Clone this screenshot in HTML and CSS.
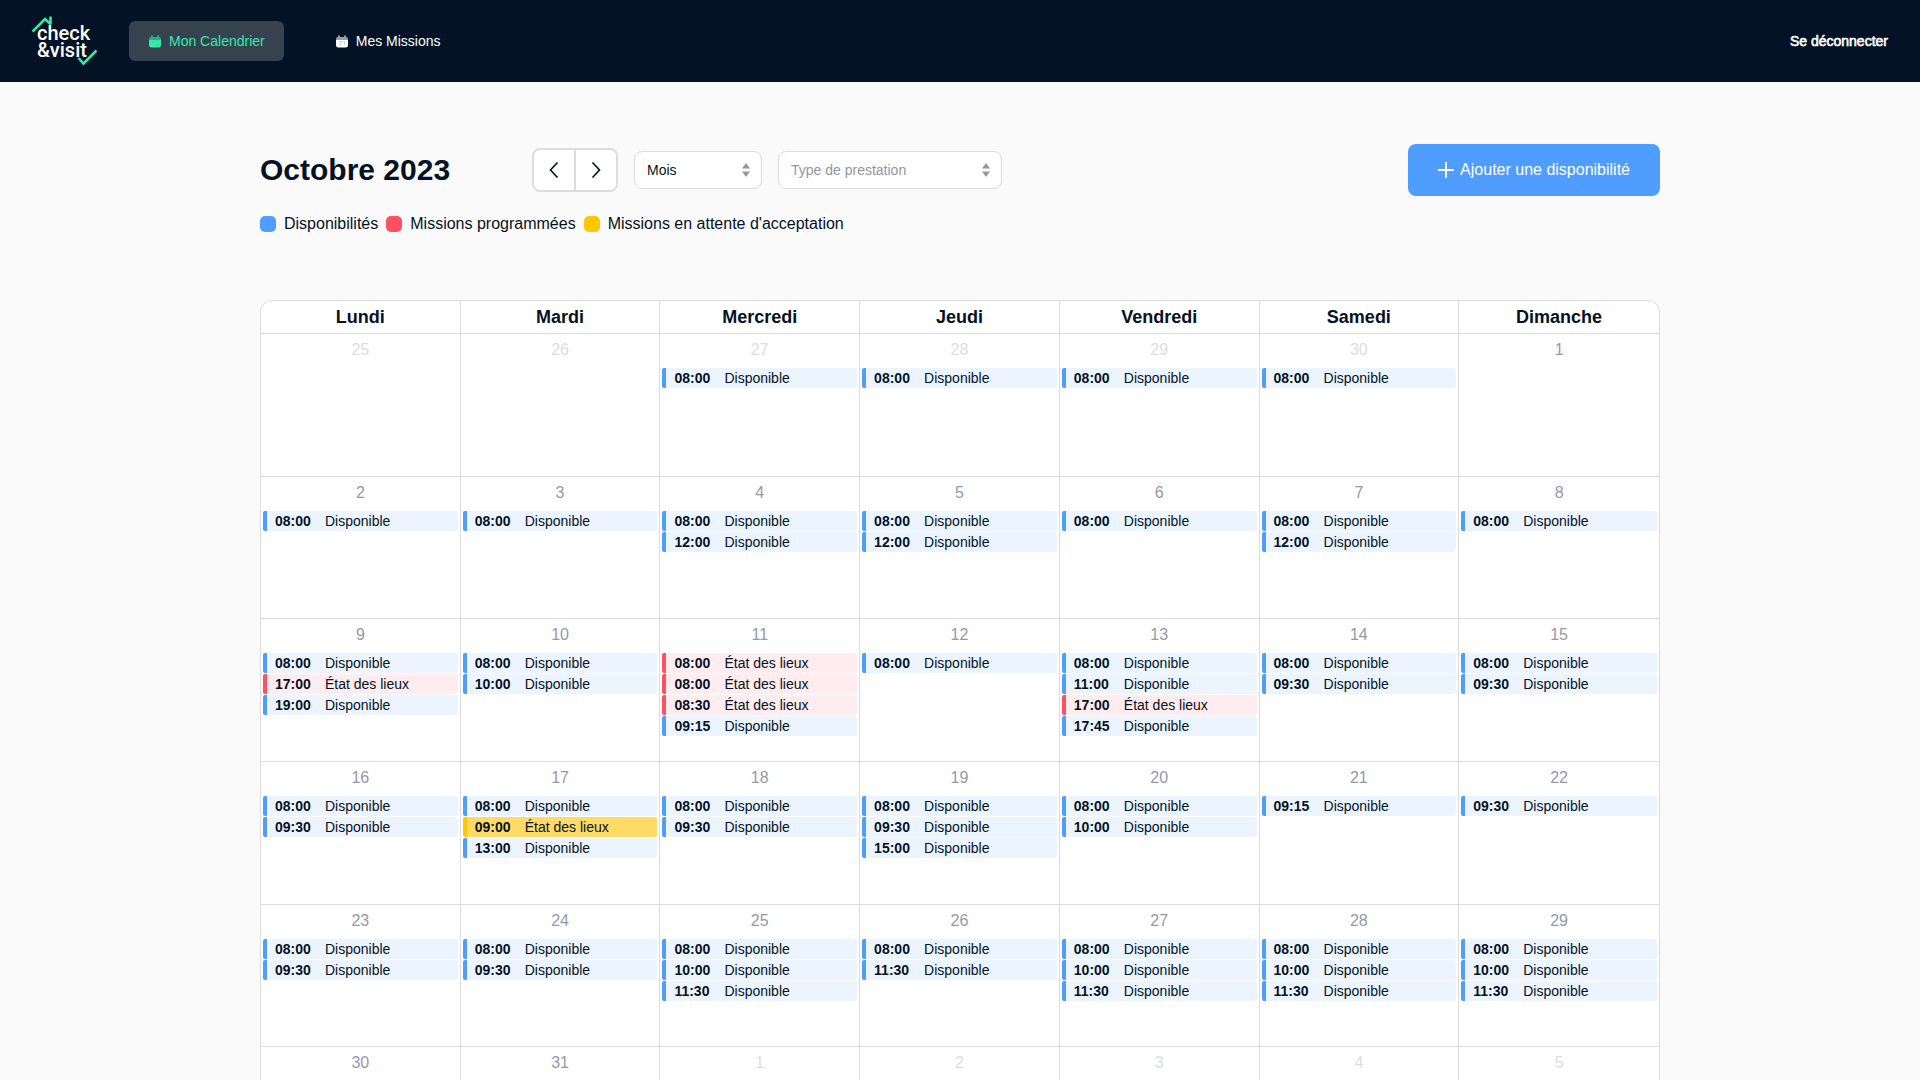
FILE: index.html
```html
<!DOCTYPE html>
<html lang="fr">
<head>
    <meta charset="UTF-8">
    <meta name="viewport" content="width=device-width, initial-scale=1.0">
    <title>Mon Calendrier</title>
    <link rel="stylesheet" href="styles.css">
</head>
<body>
    <header class="header">
        <a href="#" class="logo">
            <svg width="66" height="52" viewBox="0 0 66 52">
                <path d="M0.5 16.5 L13 4 L19 9.5 M18.5 9.5 V1.5" fill="none" stroke="#34eba6" stroke-width="2.6"/>
                <text x="5" y="25" class="logo-text">check</text>
                <text x="5" y="42" class="logo-text">&amp;visit</text>
                <path d="M46.5 43 L51.5 48.5 L64.5 35.5" fill="none" stroke="#34eba6" stroke-width="2.6"/>
            </svg>
        </a>
        <nav class="menu">
            <a href="#" class="menu-link active">
                <svg width="12" height="13" viewBox="0 0 12 13">
                    <path d="M2 2V1.2a1 1 0 0 1 2 0V2h4v-.8a1 1 0 0 1 2 0V2a2 2 0 0 1 2 2v1H0V4a2 2 0 0 1 2-2z" fill="#2ba98a"/>
                    <path d="M0 5h12v5a2.5 2.5 0 0 1-2.5 2.5h-7A2.5 2.5 0 0 1 0 10z" fill="#34eba6"/>
                    <path d="M3.5 6.5h1v1h-1z M8 9.5h1v1h-1z" fill="#2ba98a"/>
                </svg>
                Mon Calendrier
            </a>
            <a href="#" class="menu-link">
                <svg width="12" height="13" viewBox="0 0 12 13">
                    <path d="M2 2V1.2a1 1 0 0 1 2 0V2h4v-.8a1 1 0 0 1 2 0V2a2 2 0 0 1 2 2v1H0V4a2 2 0 0 1 2-2z" fill="#9a9ea6"/>
                    <path d="M0 5h12v5a2.5 2.5 0 0 1-2.5 2.5h-7A2.5 2.5 0 0 1 0 10z" fill="#fff"/>
                    <path d="M3 6.5h2.5v1.5H4v1.5h1.5M7 6.5h1.5v3.5" fill="none" stroke="#c9ccd1" stroke-width="0.8"/>
                </svg>
                Mes Missions
            </a>
        </nav>
        <a href="#" class="logout">Se déconnecter</a>
    </header>

    <main class="main">
        <div class="toolbar">
            <h1 class="title">Octobre 2023</h1>
            <div class="pager">
                <button type="button" aria-label="Mois précédent">
                    <svg width="10" height="16" viewBox="0 0 10 16"><path d="M8.5 0.5 L1.5 8 L8.5 15.5"/></svg>
                </button>
                <button type="button" aria-label="Mois suivant">
                    <svg width="10" height="16" viewBox="0 0 10 16"><path d="M1.5 0.5 L8.5 8 L1.5 15.5"/></svg>
                </button>
            </div>
            <div class="select select-view">
                <select aria-label="Affichage">
                    <option>Mois</option>
                </select>
                <svg width="8" height="14" viewBox="0 0 8 14"><path d="M4 0 L8 5.5 H0z M0 8.5 H8 L4 14z"/></svg>
            </div>
            <div class="select select-type">
                <select aria-label="Type de prestation">
                    <option>Type de prestation</option>
                </select>
                <svg width="8" height="14" viewBox="0 0 8 14"><path d="M4 0 L8 5.5 H0z M0 8.5 H8 L4 14z"/></svg>
            </div>
            <button type="button" class="add">
                <svg width="16" height="16" viewBox="0 0 16 16"><path d="M8 0 V16 M0 8 H16"/></svg>
                Ajouter une disponibilité
            </button>
        </div>

        <ul class="legend">
            <li class="blue">Disponibilités</li>
            <li class="red">Missions programmées</li>
            <li class="yellow">Missions en attente d'acceptation</li>
        </ul>

        <table class="calendar">
            <thead>
                <tr>
                    <th>Lundi</th>
                    <th>Mardi</th>
                    <th>Mercredi</th>
                    <th>Jeudi</th>
                    <th>Vendredi</th>
                    <th>Samedi</th>
                    <th>Dimanche</th>
                </tr>
            </thead>
            <tbody id="days"></tbody>
        </table>
    </main>

    <script src="calendar.js"></script>
</body>
</html>
```

FILE: styles.css
```css
*{
    box-sizing: border-box;
}
body{
    margin: 0;
    background-color: #fafafa;
    color: #031224;
    font-family: "Liberation Sans", Arial, sans-serif;
    font-size: 16px;
}
a{
    color: #fff;
    text-decoration: none;
}
button, select{
    font-family: inherit;
    color: inherit;
    cursor: pointer;
}

/* header */
.header{
    display: flex;
    align-items: center;
    height: 82px;
    padding: 0 32px;
    background-color: #031224;
    font-size: 14px;
}
.logo{
    display: flex;
    margin-right: 31px;
}
.logo-text{
    fill: #fff;
    font-family: Roboto, sans-serif;
    font-size: 20px;
    font-weight: 500;
}
.menu{
    display: flex;
    gap: 32px;
}
.menu-link{
    display: flex;
    align-items: center;
    gap: 8px;
    height: 40px;
    padding: 0 19px 0 20px;
    border-radius: 6px;
}
.menu-link.active{
    background-color: #36424f;
    color: #34eba6;
}
.logout{
    margin-left: auto;
    -webkit-text-stroke: 0.6px #fff;
}

/* toolbar */
.main{
    max-width: 1400px;
    margin: 0 auto;
    padding: 62px 0;
}
.toolbar{
    display: flex;
    align-items: center;
    gap: 16px;
    height: 52px;
}
.title{
    width: 256px;
    margin: 0;
    font-size: 30px;
}
.pager{
    display: flex;
    border: 2px solid #dedcde;
    border-radius: 8px;
    background-color: #fff;
}
.pager button{
    display: flex;
    align-items: center;
    justify-content: center;
    width: 40px;
    height: 40px;
    padding: 0;
    border: 0;
    background: none;
}
.pager button + button{
    width: 42px;
    border-left: 2px solid #dedcde;
}
.pager svg{
    fill: none;
    stroke: #031224;
    stroke-width: 1.6;
}
.select{
    position: relative;
}
.select select{
    width: 100%;
    height: 38px;
    padding: 0 12px;
    border: 1px solid #dcdcdf;
    border-radius: 8px;
    background-color: #fff;
    font-size: 14px;
    appearance: none;
}
.select svg{
    position: absolute;
    top: 12px;
    right: 12px;
    fill: #9994a0;
    pointer-events: none;
}
.select-view{
    width: 128px;
}
.select-type{
    width: 224px;
}
.select-type select{
    color: #9295a2;
}
.add{
    display: flex;
    align-items: center;
    gap: 6px;
    height: 52px;
    margin-left: auto;
    padding: 0 30px;
    border: 0;
    border-radius: 8px;
    background-color: #4f9dff;
    color: #fff;
    font-size: 16px;
}
.add svg{
    stroke: #fff;
    stroke-width: 2;
}

/* legend */
.legend{
    display: flex;
    gap: 8px;
    margin: 18px 0 66px;
    padding: 0;
    list-style: none;
    line-height: 20px;
}
.legend li{
    display: flex;
    align-items: center;
    gap: 8px;
}
.legend li::before{
    content: "";
    width: 16px;
    height: 16px;
    border-radius: 5px;
    background-color: #4f9dff;
}
.legend .red::before{
    background-color: #ff5064;
}
.legend .yellow::before{
    background-color: #ffc700;
}

/* calendar */
.calendar{
    width: 100%;
    height: 890px;
    table-layout: fixed;
    border: 1px solid #dcdcdc;
    border-radius: 12px;
    border-spacing: 0;
    background-color: #fff;
}
.calendar th{
    height: 32px;
    padding: 0;
    font-size: 18px;
    line-height: 20px;
}
.calendar td{
    height: 142px;
    padding: 6px 2px 0;
    border-top: 1px solid #dcdcdc;
    vertical-align: top;
}
.calendar th:not(:last-child), .calendar td:not(:last-child){
    border-right: 1px solid #dcdcdc;
}
.day{
    margin-bottom: 8px;
    color: #9599a8;
    line-height: 20px;
    text-align: center;
}
.day.other{
    color: #dcdde2;
}
.event{
    display: flex;
    height: 20px;
    margin-bottom: 1px;
    padding-left: 8px;
    border-left: 4px solid #4f9dff;
    border-radius: 2px;
    background-color: #ecf5ff;
    font-size: 14px;
    line-height: 20px;
}
.event b{
    width: 50px;
}
.event.mission{
    border-color: #ff5064;
    background-color: #ffecee;
}
.event.pending{
    border-color: #ffc700;
    background-color: #fddb66;
}
```

FILE: calendar.js
```js
// m = mission programmée, p = mission en attente
let events = {
    "27/9": ["08:00"],
    "28/9": ["08:00"],
    "29/9": ["08:00"],
    "30/9": ["08:00"],
    "2/10": ["08:00"],
    "3/10": ["08:00"],
    "4/10": ["08:00", "12:00"],
    "5/10": ["08:00", "12:00"],
    "6/10": ["08:00"],
    "7/10": ["08:00", "12:00"],
    "8/10": ["08:00"],
    "9/10": ["08:00", "17:00 m", "19:00"],
    "10/10": ["08:00", "10:00"],
    "11/10": ["08:00 m", "08:00 m", "08:30 m", "09:15"],
    "12/10": ["08:00"],
    "13/10": ["08:00", "11:00", "17:00 m", "17:45"],
    "14/10": ["08:00", "09:30"],
    "15/10": ["08:00", "09:30"],
    "16/10": ["08:00", "09:30"],
    "17/10": ["08:00", "09:00 p", "13:00"],
    "18/10": ["08:00", "09:30"],
    "19/10": ["08:00", "09:30", "15:00"],
    "20/10": ["08:00", "10:00"],
    "21/10": ["09:15"],
    "22/10": ["09:30"],
    "23/10": ["08:00", "09:30"],
    "24/10": ["08:00", "09:30"],
    "25/10": ["08:00", "10:00", "11:30"],
    "26/10": ["08:00", "11:30"],
    "27/10": ["08:00", "10:00", "11:30"],
    "28/10": ["08:00", "10:00", "11:30"],
    "29/10": ["08:00", "10:00", "11:30"]
};

let types = {
    m: ["mission", "État des lieux"],
    p: ["pending", "État des lieux"]
};

let html = "";
for(let i=0;i<42;i++){
    let date = new Date(2023, 8, 25 + i);
    let day = date.getDate();
    let month = date.getMonth() + 1;

    if(i % 7 == 0) html += "<tr>";
    html += `<td><div class="day${month != 10 ? " other" : ""}">${day}</div>`;
    for(let item of events[day + "/" + month] || []){
        let [time, type] = item.split(" ");
        let [name, label] = types[type] || ["available", "Disponible"];
        html += `<div class="event ${name}"><b>${time}</b>${label}</div>`;
    }
    html += "</td>";
    if(i % 7 == 6) html += "</tr>";
}
document.getElementById("days").innerHTML = html;
```
